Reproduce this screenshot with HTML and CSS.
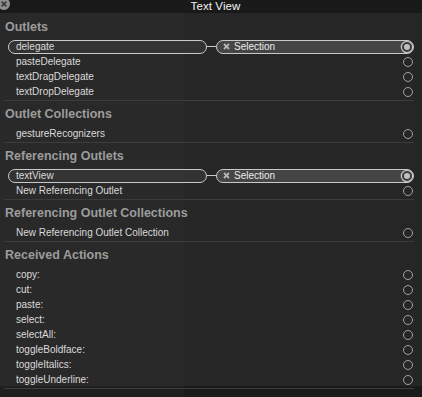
FILE: index.html
```html
<!DOCTYPE html>
<html lang="en">
<head>
    <meta charset="UTF-8">
    <meta name="viewport" content="width=device-width, initial-scale=1.0">
    <title>Text View Connections</title>
    <link rel="stylesheet" href="styles.css">
</head>
<body>
<div class="titlebar">
    <svg class="close" width="12" height="12" viewBox="0 0 12 12"><circle cx="6" cy="6" r="6" fill="#8e8e8e"/><path d="M3.6 3.6 L8.4 8.4 M8.4 3.6 L3.6 8.4" stroke="#3a3a3a" stroke-width="1.6"/></svg>
    <span class="title">Text View</span>
</div>

<div class="inspector">
    <section class="group">
        <h2>Outlets</h2>
        <div class="row linked">
            <span class="pill source">delegate</span>
            <span class="wire"></span>
            <span class="pill target">
                <svg class="obj-icon" width="7" height="7" viewBox="0 0 7 7"><path d="M1 1 L6 6 M6 1 L1 6" stroke="#b5b5b5" stroke-width="1.8"/><rect x="2.4" y="2.4" width="2.2" height="2.2" fill="#b5b5b5"/></svg>
                <span class="target-name">Selection</span>
                <span class="dot on"></span>
            </span>
        </div>
        <div class="row"><span class="label">pasteDelegate</span><span class="dot"></span></div>
        <div class="row"><span class="label">textDragDelegate</span><span class="dot"></span></div>
        <div class="row"><span class="label">textDropDelegate</span><span class="dot"></span></div>
    </section>

    <section class="group">
        <h2>Outlet Collections</h2>
        <div class="row"><span class="label">gestureRecognizers</span><span class="dot"></span></div>
    </section>

    <section class="group">
        <h2>Referencing Outlets</h2>
        <div class="row linked">
            <span class="pill source">textView</span>
            <span class="wire"></span>
            <span class="pill target">
                <svg class="obj-icon" width="7" height="7" viewBox="0 0 7 7"><path d="M1 1 L6 6 M6 1 L1 6" stroke="#b5b5b5" stroke-width="1.8"/><rect x="2.4" y="2.4" width="2.2" height="2.2" fill="#b5b5b5"/></svg>
                <span class="target-name">Selection</span>
                <span class="dot on"></span>
            </span>
        </div>
        <div class="row"><span class="label">New Referencing Outlet</span><span class="dot"></span></div>
    </section>

    <section class="group">
        <h2>Referencing Outlet Collections</h2>
        <div class="row"><span class="label">New Referencing Outlet Collection</span><span class="dot"></span></div>
    </section>

    <section class="group">
        <h2>Received Actions</h2>
        <div class="row"><span class="label">copy:</span><span class="dot"></span></div>
        <div class="row"><span class="label">cut:</span><span class="dot"></span></div>
        <div class="row"><span class="label">paste:</span><span class="dot"></span></div>
        <div class="row"><span class="label">select:</span><span class="dot"></span></div>
        <div class="row"><span class="label">selectAll:</span><span class="dot"></span></div>
        <div class="row"><span class="label">toggleBoldface:</span><span class="dot"></span></div>
        <div class="row"><span class="label">toggleItalics:</span><span class="dot"></span></div>
        <div class="row"><span class="label">toggleUnderline:</span><span class="dot"></span></div>
    </section>
</div>
</body>
</html>
```

FILE: styles.css
```css
html {
    background-color: #1b1b1b;
}

body {
    margin: 0;
    height: 397px;
    overflow: hidden;
    font-family: 'Liberation Sans', Arial, sans-serif;
    color: #dadada;
    user-select: none;
    background: linear-gradient(to right, #1f1f1f 0, #1f1f1f 184px, #1a1a1a 184px);
}

.titlebar {
    height: 13px;
    background-color: #191919;
    display: flex;
    align-items: center;
    justify-content: center;
    padding-left: 9px;
    position: relative;
}

.title {
    color: #f2f2f2;
    font-size: 11.5px;
    line-height: 13px;
    letter-spacing: 0.1px;
}

.close {
    position: absolute;
    left: -2px;
    top: -2px;
}

.inspector {
    background: linear-gradient(to right, #292929 0, #292929 184px, #262626 184px);
    padding: 1px 8px 0 4px;
    height: 372px;
}

.group {
    border-bottom: 1px solid #3c3c3c;
    padding-bottom: 1px;
}

.group h2 {
    margin: 0;
    height: 25px;
    line-height: 26px;
    padding-left: 1px;
    font-size: 12.5px;
    font-weight: 700;
    color: #9c9c9c;
}

.row {
    height: 15px;
    display: flex;
    align-items: center;
    padding-left: 12px;
    padding-right: 1px;
    font-size: 10px;
}

.label {
    flex: 1;
}

.dot {
    width: 8px;
    height: 8px;
    border: 1.5px solid #a2a2a2;
    border-radius: 50%;
}

.dot.on {
    width: 6px;
    height: 6px;
    border: 2.5px solid #3c3c3c;
    background-color: #c0c0c0;
    box-shadow: 0 0 0 1.3px #c0c0c0;
    margin-right: 1px;
}

.linked {
    padding-left: 4px;
    padding-right: 0;
}

.pill {
    height: 12px;
    border: 1px solid #c9c9c9;
    border-radius: 7px;
    display: flex;
    align-items: center;
}

.source {
    width: 190px;
    padding-left: 7px;
    background-color: #333333;
}

.wire {
    width: 9px;
    height: 1px;
    background-color: #c9c9c9;
}

.target {
    flex: 1;
    padding-left: 6px;
    background-color: #454545;
}

.obj-icon {
    margin-right: 4px;
}

.target-name {
    flex: 1;
    color: #ececec;
}
```
